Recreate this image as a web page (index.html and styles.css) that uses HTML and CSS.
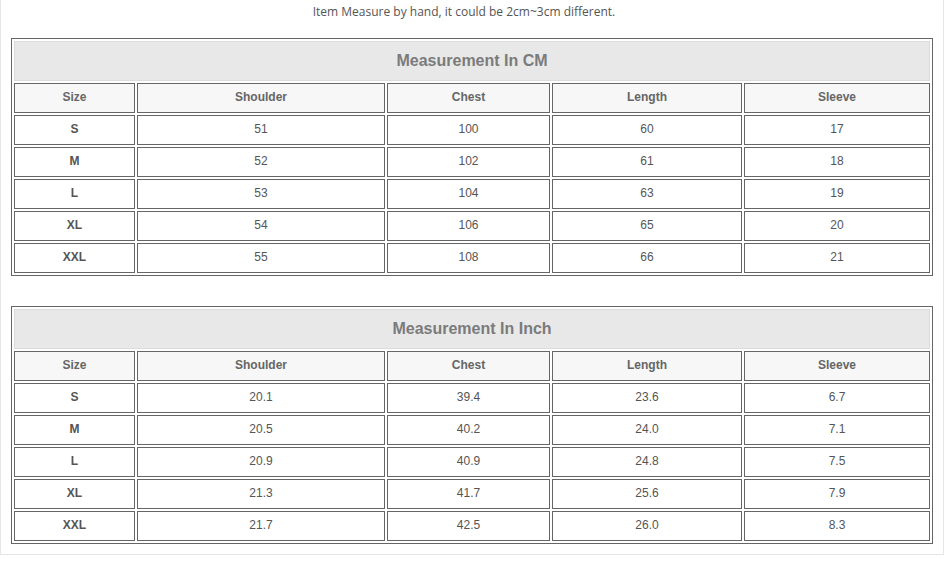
FILE: index.html
```html
<!DOCTYPE html>
<html>
<head>
<meta charset="utf-8">
<link rel="stylesheet" href="styles.css">
</head>
<body>
<div class="wrap">
  <p class="note">Item Measure by hand, it could be 2cm~3cm different.</p>
  <table class="size-table">
    <colgroup><col class="c1"><col class="c2"><col class="c3"><col class="c4"><col class="c5"></colgroup>
    <tr><th class="title" colspan="5">Measurement In CM</th></tr>
    <tr class="head"><th>Size</th><th>Shoulder</th><th>Chest</th><th>Length</th><th>Sleeve</th></tr>
    <tr><td class="sz">S</td><td>51</td><td>100</td><td>60</td><td>17</td></tr>
    <tr><td class="sz">M</td><td>52</td><td>102</td><td>61</td><td>18</td></tr>
    <tr><td class="sz">L</td><td>53</td><td>104</td><td>63</td><td>19</td></tr>
    <tr><td class="sz">XL</td><td>54</td><td>106</td><td>65</td><td>20</td></tr>
    <tr><td class="sz">XXL</td><td>55</td><td>108</td><td>66</td><td>21</td></tr>
  </table>
  <table class="size-table second">
    <colgroup><col class="c1"><col class="c2"><col class="c3"><col class="c4"><col class="c5"></colgroup>
    <tr><th class="title" colspan="5">Measurement In Inch</th></tr>
    <tr class="head"><th>Size</th><th>Shoulder</th><th>Chest</th><th>Length</th><th>Sleeve</th></tr>
    <tr><td class="sz">S</td><td>20.1</td><td>39.4</td><td>23.6</td><td>6.7</td></tr>
    <tr><td class="sz">M</td><td>20.5</td><td>40.2</td><td>24.0</td><td>7.1</td></tr>
    <tr><td class="sz">L</td><td>20.9</td><td>40.9</td><td>24.8</td><td>7.5</td></tr>
    <tr><td class="sz">XL</td><td>21.3</td><td>41.7</td><td>25.6</td><td>7.9</td></tr>
    <tr><td class="sz">XXL</td><td>21.7</td><td>42.5</td><td>26.0</td><td>8.3</td></tr>
  </table>
</div>
</body>
</html>
```

FILE: styles.css
```css
html, body {
  margin: 0;
  padding: 0;
  background: #fff;
}

.wrap {
  box-sizing: border-box;
  width: 944px;
  border: 1px solid #e6e6e6;
  border-top: none;
  padding: 3px 10px 10px;
  background: #fff;
}

.note {
  margin: 0 0 17px;
  padding-right: 16px;
  text-align: center;
  font-family: "Open Sans", "Liberation Sans", sans-serif;
  font-size: 12px;
  line-height: 18px;
  color: #555;
}

.size-table {
  width: 922px;
  table-layout: fixed;
  border-collapse: separate;
  border-spacing: 2px;
  border: 1px solid #666;
  font-family: "Liberation Sans", Arial, sans-serif;
  font-size: 12px;
  color: #555;
}

.size-table.second {
  margin-top: 30px;
}

.c1 { width: 121px; }
.c2 { width: 248px; }
.c3 { width: 163px; }
.c4 { width: 190px; }
.c5 { width: 186px; }

.size-table th,
.size-table td {
  box-sizing: border-box;
  border: 1px solid #666;
  padding: 0 0 2px;
  height: 30px;
  text-align: center;
  vertical-align: middle;
}

.size-table .title {
  height: 40px;
  padding: 0;
  background: #e8e8e8;
  border-color: #dcdcdc;
  font-size: 16px;
  font-weight: bold;
  color: #7b7b7b;
}

.size-table .head th {
  background: #f7f7f7;
  font-weight: bold;
  color: #666;
}

.size-table td.sz {
  font-weight: bold;
}
```
